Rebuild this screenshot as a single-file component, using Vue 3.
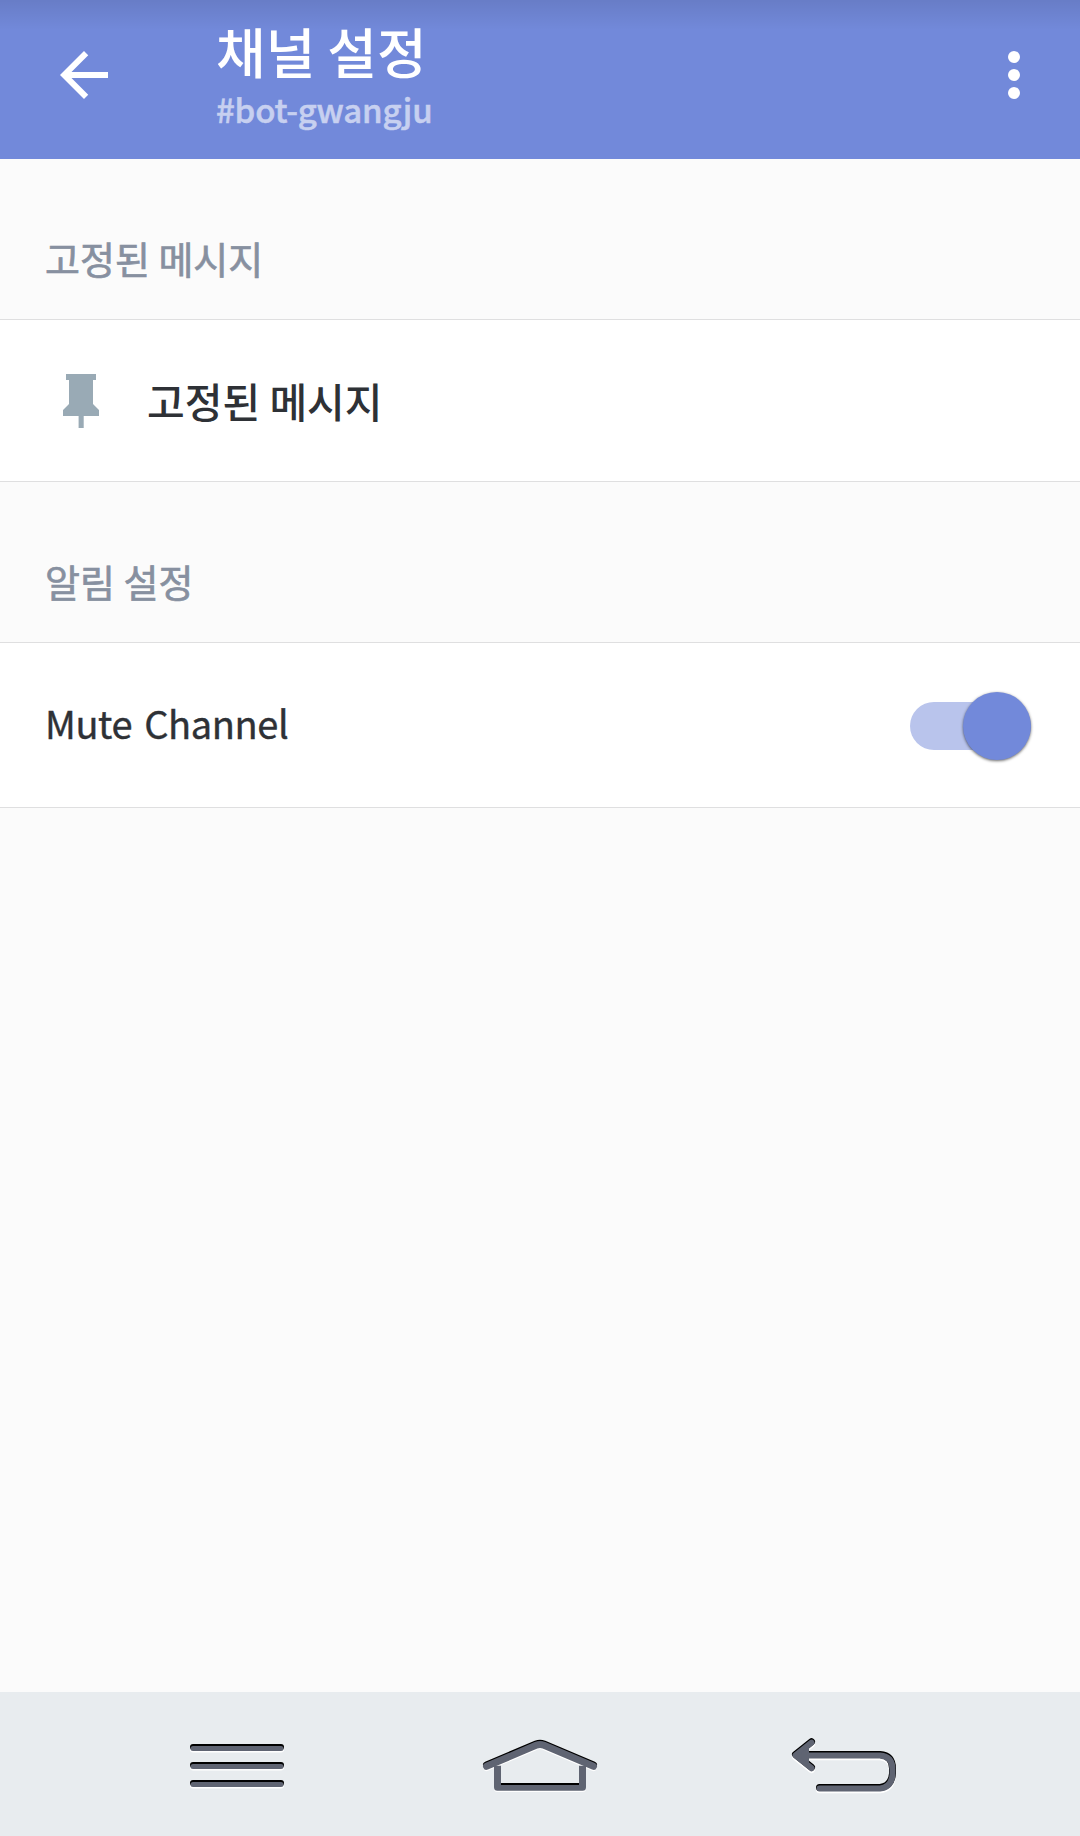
<script setup>
import { ref } from 'vue';

const channel = ref('bot-gwangju');
const isMuted = ref(true);

const toggleMute = () => {
  isMuted.value = !isMuted.value;
};
</script>

<template>
  <div class="screen">
    <header class="app-bar">
      <button class="icon-btn back-btn">
        <svg viewBox="0 0 24 24" width="72" height="72" fill="#fff">
          <path d="M20 11H7.83l5.59-5.59L12 4l-8 8 8 8 1.41-1.41L7.83 13H20v-2z" />
        </svg>
      </button>
      <div class="titles">
        <h1 class="title">채널 설정</h1>
        <p class="subtitle">#{{ channel }}</p>
      </div>
      <button class="icon-btn more-btn">
        <svg viewBox="0 0 24 24" width="72" height="72" fill="#fff">
          <circle cx="12" cy="6" r="2" />
          <circle cx="12" cy="12" r="2" />
          <circle cx="12" cy="18" r="2" />
        </svg>
      </button>
    </header>

    <main class="content">
      <h2 class="section-title">고정된 메시지</h2>
      <div class="row pin-row">
        <svg class="pin" viewBox="0 0 36 54" width="36" height="54" fill="#99aab5">
          <path d="M3 0h30v6h-3v24l6 6v6H20.7v12h-5.1V42H0v-6l6-6V6H3z" />
        </svg>
        <span class="row-label">고정된 메시지</span>
      </div>

      <h2 class="section-title">알림 설정</h2>
      <div class="row mute-row">
        <span class="mute-label">Mute Channel</span>
        <button :class="['switch', { on: isMuted }]" @click="toggleMute">
          <span class="thumb"></span>
        </button>
      </div>
    </main>

    <nav class="nav-bar">
      <svg class="nav-icon" viewBox="0 0 130 144" width="130" height="144">
        <g fill="none" stroke-width="6" stroke-linecap="round">
          <g v-for="y in [56, 74, 92]" :key="y">
            <path :d="`M23 ${y + 1.5}h88`" stroke="#fff" />
            <path :d="`M23 ${y - 1}h88`" stroke="#000" />
            <path :d="`M23 ${y + 0.5}h88`" stroke="#5f6472" stroke-width="5" />
          </g>
        </g>
      </svg>
      <svg class="nav-icon" viewBox="0 0 140 144" width="140" height="144">
        <defs>
          <g id="home" fill="none" stroke-width="7" stroke-linejoin="round">
            <path d="M27.5 73v21.5h85V73" />
            <path d="M16.5 73.5L66 52.5q4-1.5 8 0L123.5 73.5" stroke-linecap="round" />
          </g>
        </defs>
        <use href="#home" y="2" stroke="#fff" />
        <path d="M16.5 73L66 52q4-1.5 8 0L123.5 73" fill="none" stroke="#000" stroke-width="7" stroke-linecap="round" />
        <use href="#home" y="0.8" stroke="#5f6472" />
        <path d="M31 92h78" stroke="#000" stroke-width="2" />
      </svg>
      <svg class="nav-icon" viewBox="0 0 130 144" width="130" height="144">
        <defs>
          <g id="back" fill="none" stroke-linecap="round" stroke-linejoin="round">
            <path d="M31.5 50L15.5 62.7 31.5 75.5" />
            <path d="M18 62.7H100q12.5 1 12.5 14v5q-1 13-12.5 14H39.5" />
          </g>
        </defs>
        <use href="#back" y="2" stroke="#fff" stroke-width="7" />
        <use href="#back" y="-0.3" stroke="#000" stroke-width="7" />
        <use href="#back" y="0.7" stroke="#5f6472" stroke-width="6" />
        <path d="M18 63.5l11-8.5v17z" fill="#5f6472" />
      </svg>
    </nav>
  </div>
</template>

<style>
body {
  margin: 0;
  background: #fbfbfb;
}
</style>

<style scoped>
.screen {
  display: flex;
  flex-direction: column;
  width: 1080px;
  height: 1836px;
  overflow: hidden;
  background: #fbfbfb;
  font-family: 'Noto Sans CJK KR', 'Noto Sans', sans-serif;
}
button {
  padding: 0;
  border: none;
  background: none;
  cursor: pointer;
}
svg {
  display: block;
}
.app-bar {
  display: flex;
  box-sizing: border-box;
  height: 159px;
  padding: 0 30px 0 48px;
  background: linear-gradient(rgba(0, 0, 0, 0.09), rgba(0, 0, 0, 0) 30px) #7289da;
}
.icon-btn {
  width: 72px;
  height: 72px;
  margin-top: 39px;
}
.titles {
  flex: 1;
  padding: 25px 0 0 96px;
}
.title {
  margin: 0;
  color: #fff;
  font-family: 'Liberation Sans', 'Noto Sans CJK KR', sans-serif;
  font-size: 54px;
  font-weight: 500;
  line-height: 60px;
  word-spacing: -3px;
}
.subtitle {
  margin: 0;
  padding-top: 2px;
  color: #c7d0f0;
  font-size: 33px;
  font-weight: 500;
  line-height: 45px;
  letter-spacing: -0.2px;
  -webkit-text-stroke: 0.5px #c7d0f0;
}
.content {
  flex: 1;
}
.section-title {
  box-sizing: border-box;
  height: 160px;
  margin: 0;
  padding: 75px 45px 0;
  color: #8790a0;
  font-size: 38px;
  font-weight: 400;
  line-height: 48px;
  -webkit-text-stroke: 0.7px #8790a0;
}
.row {
  display: flex;
  align-items: center;
  box-sizing: border-box;
  border-top: 1px solid #dfdfe0;
  border-bottom: 1px solid #dfdfe0;
  background: #fff;
  color: #2e3136;
}
.pin-row {
  height: 163px;
  padding-left: 63px;
}
.row-label {
  margin-left: 48px;
  padding-bottom: 2px;
  font-size: 41px;
  font-weight: 500;
}
.mute-row {
  justify-content: space-between;
  height: 166px;
  padding: 0 49px 0 45px;
}
.mute-label {
  padding-bottom: 5px;
  font-size: 38px;
  font-weight: 400;
  letter-spacing: -0.4px;
  word-spacing: 4px;
  -webkit-text-stroke: 0.4px #2e3136;
}
.switch {
  display: flex;
  align-items: center;
  width: 121px;
  height: 48px;
  margin-top: 1px;
  border-radius: 24px;
  background: #c4c4c4;
}
.switch .thumb {
  width: 68px;
  height: 68px;
  border-radius: 50%;
  background: #f1f1f1;
  box-shadow: 0 1px 3px rgba(0, 0, 0, 0.6);
}
.switch.on {
  justify-content: flex-end;
  background: #b9c4ec;
}
.switch.on .thumb {
  background: #7289da;
}
.nav-bar {
  display: flex;
  justify-content: space-between;
  height: 144px;
  padding: 0 170px;
  background: #e8ecef;
}
</style>
